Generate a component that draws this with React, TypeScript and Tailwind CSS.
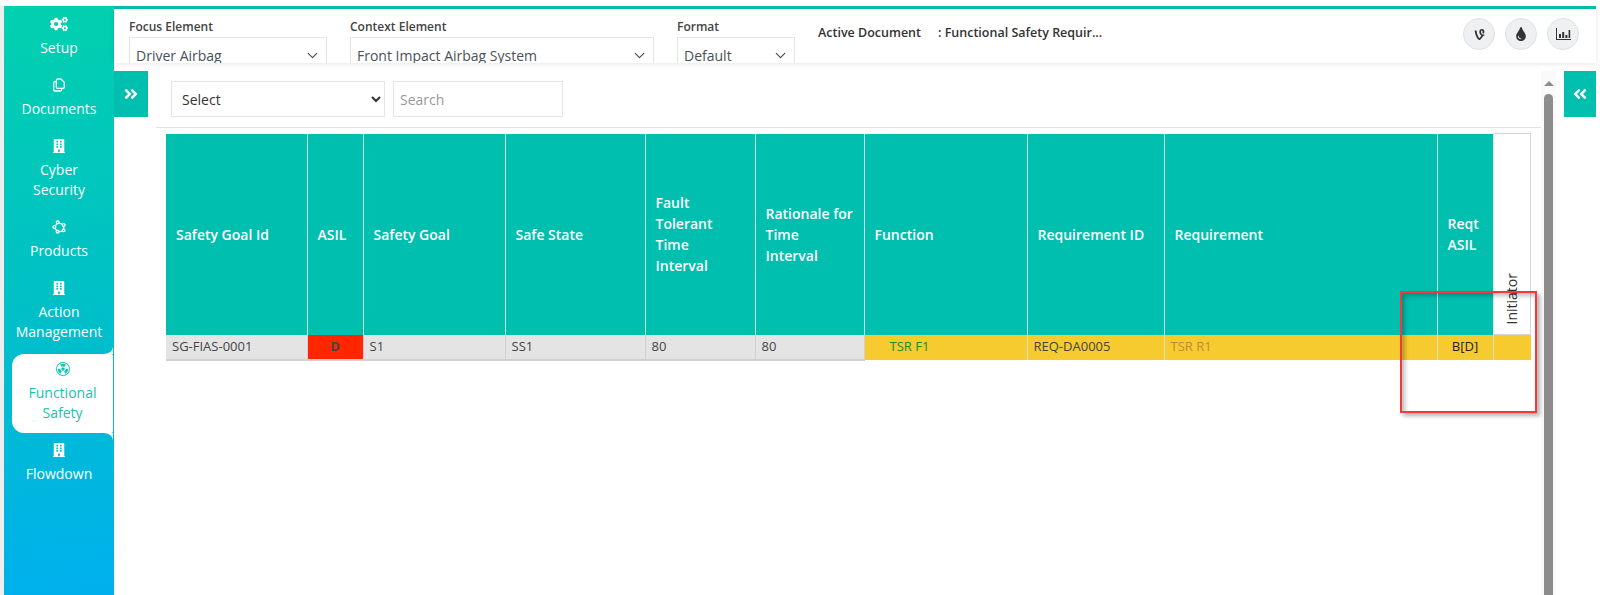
import { ChevronDown } from "lucide-react";
import { BiShapePolygon } from "react-icons/bi";
import { BsRadioactive } from "react-icons/bs";
import { FaAngleDoubleLeft, FaAngleDoubleRight, FaBuilding, FaCogs, FaTint, FaVine } from "react-icons/fa";
import { HiOutlineDocumentDuplicate } from "react-icons/hi";
import type { ReactNode } from "react";

const FONT = "font-['Open_Sans',sans-serif]";

function NavItem({ icon, lines, active }: { icon: ReactNode; lines: string[]; active?: boolean }) {
  if (active) {
    return (
      <div className="relative ml-2 mr-px -mt-px mb-[3px] flex flex-col items-center rounded-l-[12px] rounded-r-[2px] bg-white pb-[10px] pt-px text-[#14c4ae]">
        <svg className="absolute -top-2 right-0 h-2 w-[10px]" viewBox="0 0 10 8">
          <path d="M10 0V8H0C6 8 10 5 10 0Z" fill="#fff" />
        </svg>
        <svg className="absolute -bottom-2 right-0 h-2 w-[10px]" viewBox="0 0 10 8">
          <path d="M10 8V0H0C6 0 10 3 10 8Z" fill="#fff" />
        </svg>
        <div className="flex h-7 items-center">{icon}</div>
        {lines.map((l) => (
          <div key={l} className="h-5 text-center">
            {l}
          </div>
        ))}
      </div>
    );
  }
  return (
    <div className="mb-[13px] flex flex-col items-center text-white">
      <div className="flex h-7 items-center">{icon}</div>
      {lines.map((l) => (
        <div key={l} className="h-5 text-center">
          {l}
        </div>
      ))}
    </div>
  );
}

function Field({ label, value, width, gap }: { label: string; value: string; width: string; gap: string }) {
  return (
    <div className={`${width} ${gap} -mt-[6px] shrink-0`}>
      <div className="h-5 text-[12px] font-semibold leading-5 text-[#444]">{label}</div>
      <button type="button" className="flex h-9 w-full items-center justify-between border border-[#e5e5e5] bg-white pl-[6px] pr-[5px] text-[14px] text-[#495057]">
        <span>{value}</span>
        <ChevronDown size={17} strokeWidth={1.5} className="text-[#444]" />
      </button>
    </div>
  );
}

function RoundBtn({ children }: { children: ReactNode }) {
  return <div className="flex h-8 w-8 items-center justify-center rounded-full border border-[#dde2e6] bg-[#eef0f2] text-[#333]">{children}</div>;
}

const HEADERS: { label: ReactNode; w: string }[] = [
  { label: "Safety Goal Id", w: "w-[141px]" },
  { label: "ASIL", w: "w-[56px]" },
  { label: "Safety Goal", w: "w-[142px]" },
  { label: "Safe State", w: "w-[140px]" },
  { label: <>Fault<br />Tolerant<br />Time<br />Interval</>, w: "w-[110px]" },
  { label: <>Rationale for<br />Time<br />Interval</>, w: "w-[109px]" },
  { label: "Function", w: "w-[163px]" },
  { label: "Requirement ID", w: "w-[137px]" },
  { label: "Requirement", w: "w-[273px]" },
  { label: <>Reqt<br />ASIL</>, w: "w-[56px]" },
];

export default function App() {
  return (
    <div className={`${FONT} relative flex h-[595px] w-[1600px] flex-col overflow-hidden bg-white`}>
      <div className="h-[6px] shrink-0" />
      <div className="flex min-h-0 flex-1">
        <div className="w-1 shrink-0 bg-[#eeeeee]" />

        {/* sidebar */}
        <div className="w-[110px] shrink-0 bg-[linear-gradient(172deg,#02d0ae,#00c0c6_50%,#00b0ee)] pt-1 text-[14px] leading-5">
          <NavItem icon={<FaCogs size={18} />} lines={["Setup"]} />
          <NavItem icon={<HiOutlineDocumentDuplicate size={16} />} lines={["Documents"]} />
          <NavItem icon={<FaBuilding size={14} />} lines={["Cyber", "Security"]} />
          <NavItem icon={<BiShapePolygon size={16} />} lines={["Products"]} />
          <NavItem icon={<FaBuilding size={14} />} lines={["Action", "Management"]} />
          <NavItem active icon={<BsRadioactive size={14} />} lines={["Functional", "Safety"]} />
          <NavItem icon={<FaBuilding size={14} />} lines={["Flowdown"]} />
        </div>

        <div className="flex min-w-0 flex-1 flex-col border-t-[3px] border-[#00bfae]">
          {/* top filter bar */}
          <div className="flex h-[54px] shrink-0 items-start overflow-hidden pt-[14px] shadow-[0_1px_5px_rgba(0,0,0,0.1)]">
            <Field label="Focus Element" value="Driver Airbag" width="w-[198px]" gap="ml-[15px]" />
            <Field label="Context Element" value="Front Impact Airbag System" width="w-[304px]" gap="ml-[23px]" />
            <Field label="Format" value="Default" width="w-[118px]" gap="ml-[23px]" />
            <div className="ml-[23px] w-[120px] shrink-0 text-[12.5px] font-semibold leading-5 text-[#333]">Active Document</div>
            <div className="w-[172px] shrink-0 text-[12.5px] font-semibold leading-5 text-[#333]">: Functional Safety Requir...</div>
            <div className="-mt-[5px] ml-auto mr-[17px] flex gap-[10px]">
              <RoundBtn><FaVine size={13} /></RoundBtn>
              <RoundBtn><FaTint size={14} /></RoundBtn>
              <RoundBtn>
                <svg width="15" height="13" viewBox="0 0 15 13" fill="currentColor">
                  <path d="M0 0h1v11h14v1H0zM3 6h2v4H3zM6.2 4h2v6h-2zM9.4 7h2v3h-2zM12.6 2h1.6v8h-1.6z" />
                </svg>
              </RoundBtn>
            </div>
          </div>

          <div className="flex min-h-0 flex-1 pt-2">
            <div className="flex h-[46px] w-[34px] shrink-0 items-center justify-center bg-[#00bfae] text-white">
              <FaAngleDoubleRight size={16} />
            </div>

            <div className="ml-2 w-[1385px] shrink-0">
              <div className="flex gap-2 pl-[15px] pt-[10px]">
                <select className="h-9 w-[214px] border border-[#e5e5e5] bg-white pl-[6px] text-[14px] text-[#333]">
                  <option>Select</option>
                </select>
                <input placeholder="Search" className="h-9 w-[170px] border border-[#e5e5e5] px-[6px] text-[14px] placeholder:text-[#999]" />
              </div>
              <div className="mt-[10px] h-px bg-[#e2e2e2]" />

              <table className="ml-[10px] mt-[5px] w-[1365px] table-fixed border-collapse text-[13px]">
                <thead>
                  <tr className="h-[201px]">
                    {HEADERS.map((h, i) => (
                      <th key={i} className={`${h.w} border-r border-[#cfe9e4] bg-[#00bfae] pl-[10px] text-left text-[14px] font-semibold leading-[21px] text-white`}>
                        {h.label}
                      </th>
                    ))}
                    <th className="border border-[#d5d5d5] bg-white p-0 align-bottom">
                      <div className="flex justify-center pb-[10px]">
                        <span className="rotate-180 text-[14px] font-normal leading-5 text-[#333] [writing-mode:vertical-rl]">Initiator</span>
                      </div>
                    </th>
                  </tr>
                </thead>
                <tbody>
                  <tr className="h-[25px] text-[#444]">
                    <td className="border-b-2 border-r border-[#d0d0d0] bg-[#e4e4e4] pl-[6px]">SG-FIAS-0001</td>
                    <td className="border-b-2 border-r border-[#d0d0d0] bg-[#ff2600] text-center font-bold">D</td>
                    <td className="border-b-2 border-r border-[#d0d0d0] bg-[#e4e4e4] pl-[6px]">S1</td>
                    <td className="border-b-2 border-r border-[#d0d0d0] bg-[#e4e4e4] pl-[6px]">SS1</td>
                    <td className="border-b-2 border-r border-[#d0d0d0] bg-[#e4e4e4] pl-[6px]">80</td>
                    <td className="border-b-2 border-r border-[#d0d0d0] bg-[#e4e4e4] pl-[6px]">80</td>
                    <td className="border-r border-[#e4dfc4] bg-[#f6cb30] pl-[25px] text-[#1f8a1f]">TSR F1</td>
                    <td className="border-r border-[#e4dfc4] bg-[#f6cb30] pl-[6px]">REQ-DA0005</td>
                    <td className="border-r border-[#e4dfc4] bg-[#f6cb30] pl-[6px] text-[#c08a3c]">TSR R1</td>
                    <td className="border-r border-[#e4dfc4] bg-[#f6cb30] text-center text-[#222]">B[D]</td>
                    <td className="bg-[#f6cb30]" />
                  </tr>
                </tbody>
              </table>
            </div>

            {/* scrollbar */}
            <div className="flex w-[15px] shrink-0 flex-col items-center bg-[#fafafa] pt-[10px]">
              <div className="h-0 w-0 border-x-[5px] border-b-[5px] border-x-transparent border-b-[#8c8c8c]" />
              <div className="mt-2 w-[9px] flex-1 rounded-t-[5px] bg-[#8c8c8c]" />
            </div>

            <div className="ml-2 flex h-[46px] w-8 shrink-0 items-center justify-center bg-[#00bfae] text-white">
              <FaAngleDoubleLeft size={16} />
            </div>
          </div>
        </div>
        <div className="w-1 shrink-0" />
      </div>

      {/* annotation drawn over the screenshot */}
      <div className="absolute left-[1400px] top-[291px] h-[122px] w-[137px] border-2 border-[#f23a3a] shadow-[3px_3px_4px_rgba(0,0,0,0.3),inset_3px_3px_4px_rgba(0,0,0,0.25)]" />
    </div>
  );
}
